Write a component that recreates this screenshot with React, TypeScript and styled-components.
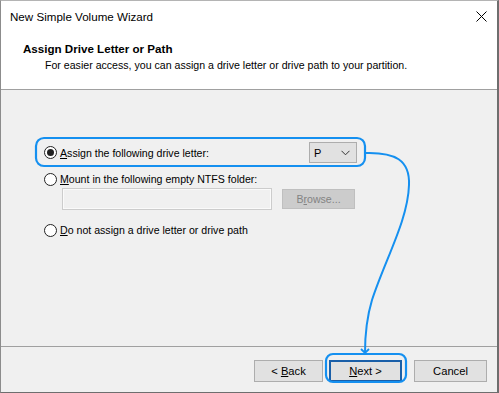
import React from "react";
import styled, { createGlobalStyle } from "styled-components";

const Global = createGlobalStyle`
  html, body { margin: 0; padding: 0; background: #2b2b2b; }
  #root { width: 499px; height: 393px; }
  * { box-sizing: border-box; }
`;

const Window = styled.div`
  position: relative;
  width: 499px;
  height: 393px;
  display: flex;
  flex-direction: column;
  background: #f0f0f0;
  border-top: 1px solid #b4b4b4;
  border-left: 1px solid #8c8c8c;
  border-right: 2px solid #6e6e6e;
  border-bottom: 1px solid #6e6e6e;
  font-family: "Liberation Sans", Arial, sans-serif;
  color: #000;
  overflow: hidden;
`;

const TitleBar = styled.div`
  height: 30px;
  flex: none;
  display: flex;
  align-items: center;
  justify-content: space-between;
  background: #fff;
  padding-left: 9px;
  padding-right: 10px;
  font-size: 11.6px;
`;

const CloseIcon = styled.svg`
  width: 11px;
  height: 11px;
  display: block;
`;

const Header = styled.div`
  height: 59px;
  flex: none;
  background: #fff;
  border-bottom: 1px solid #a0a0a0;
  padding: 11px 0 0 22px;
`;

const HeaderTitle = styled.div`
  font-weight: bold;
  font-size: 11.6px;
  line-height: 14px;
`;

const HeaderSub = styled.div`
  font-size: 10.6px;
  line-height: 14px;
  margin-top: 2px;
  padding-left: 22px;
`;

const Body = styled.div`
  flex: 1;
  display: flex;
  flex-direction: column;
  padding: 52px 0 0 43px;
`;

const Row = styled.div<{ $mt?: number }>`
  display: flex;
  align-items: center;
  width: 313px;
  margin-top: ${(p) => p.$mt ?? 0}px;
  font-size: 10.6px;
  min-height: 16px;
`;

const Radio = styled.span<{ $checked?: boolean }>`
  width: 13px;
  height: 13px;
  border-radius: 50%;
  border: 1px solid #222;
  background: #fff;
  flex: none;
  display: flex;
  align-items: center;
  justify-content: center;
  margin-right: 3px;
  &::after {
    content: "";
    width: 7px;
    height: 7px;
    border-radius: 50%;
    background: ${(p) => (p.$checked ? "#222" : "transparent")};
  }
`;

const Label = styled.span`
  flex: 1;
  white-space: nowrap;
`;

const U = styled.span`
  text-decoration: underline;
  text-underline-offset: 1px;
`;

const Select = styled.div`
  width: 48px;
  height: 21px;
  background: #e1e1e1;
  border: 1px solid #adadad;
  display: flex;
  align-items: center;
  justify-content: space-between;
  padding: 0 6px 0 4px;
  font-size: 11px;
`;

const FolderRow = styled.div`
  display: flex;
  align-items: center;
  margin: 1px 0 0 18px;
`;

const TextField = styled.div`
  width: 210px;
  height: 22px;
  background: #f0f0f0;
  border: 1px solid #cccccc;
  box-shadow: inset 0 0 0 1px #fafafa;
`;

const DisabledButton = styled.div`
  width: 73px;
  height: 20px;
  margin-left: 10px;
  background: #cccccc;
  border: 1px solid #bfbfbf;
  color: #838383;
  font-size: 10.6px;
  display: flex;
  align-items: center;
  justify-content: center;
`;

const Footer = styled.div`
  height: 46px;
  flex: none;
  border-top: 1px solid #a0a0a0;
  display: flex;
  justify-content: flex-end;
  align-items: flex-start;
  padding: 13px 10px 0 0;
`;

const Button = styled.div<{ $primary?: boolean; $w?: number; $mr?: number }>`
  width: ${(p) => p.$w ?? 73}px;
  height: 22px;
  margin-right: ${(p) => p.$mr ?? 0}px;
  background: #e1e1e1;
  border: ${(p) => (p.$primary ? "2px solid #1a5fa8" : "1px solid #adadad")};
  font-size: 11.2px;
  display: flex;
  align-items: center;
  justify-content: center;
`;

const Overlay = styled.svg`
  position: absolute;
  left: -1px;
  top: -1px;
  width: 499px;
  height: 393px;
  pointer-events: none;
`;

const BLUE = "#1590f0";

export default function App() {
  return (
    <>
      <Global />
      <Window>
        <TitleBar>
          <span>New Simple Volume Wizard</span>
          <CloseIcon viewBox="0 0 11 11">
            <path d="M0.5 0.5 L10.5 10.5 M10.5 0.5 L0.5 10.5" stroke="#000" strokeWidth="1" />
          </CloseIcon>
        </TitleBar>
        <Header>
          <HeaderTitle>Assign Drive Letter or Path</HeaderTitle>
          <HeaderSub>For easier access, you can assign a drive letter or drive path to your partition.</HeaderSub>
        </Header>
        <Body>
          <Row>
            <Radio $checked />
            <Label>
              <U>A</U>ssign the following drive letter:
            </Label>
            <Select>
              <span>P</span>
              <svg width="9" height="6" viewBox="0 0 9 6">
                <path d="M0.5 0.8 L4.5 4.8 L8.5 0.8" stroke="#333" strokeWidth="1" fill="none" />
              </svg>
            </Select>
          </Row>
          <Row $mt={8}>
            <Radio />
            <Label>
              <U>M</U>ount in the following empty NTFS folder:
            </Label>
          </Row>
          <FolderRow>
            <TextField />
            <DisabledButton>
              <span>
                B<U>r</U>owse...
              </span>
            </DisabledButton>
          </FolderRow>
          <Row $mt={12}>
            <Radio />
            <Label>
              <U>D</U>o not assign a drive letter or drive path
            </Label>
          </Row>
        </Body>
        <Footer>
          <Button $w={69} $mr={6}>
            <span>
              &lt; <U>B</U>ack
            </span>
          </Button>
          <Button $primary $mr={12}>
            <span>
              <U>N</U>ext &gt;
            </span>
          </Button>
          <Button>Cancel</Button>
        </Footer>
        <Overlay viewBox="0 0 499 393">
          <rect x="36" y="138" width="329" height="28" rx="8" fill="none" stroke={BLUE} strokeWidth="2.2" />
          <rect x="326" y="354" width="80" height="28" rx="7" fill="none" stroke={BLUE} strokeWidth="2.2" />
          <path
            d="M365 153 C395 152, 410 160, 409 185 C408 220, 385 260, 372 300 C366 320, 365 335, 365 353"
            fill="none"
            stroke={BLUE}
            strokeWidth="2"
          />
          <path d="M361 349 L365 353 L369 349" fill="none" stroke={BLUE} strokeWidth="1.8" />
        </Overlay>
      </Window>
    </>
  );
}
